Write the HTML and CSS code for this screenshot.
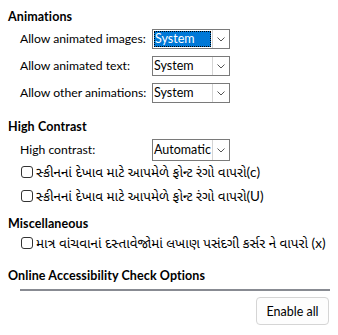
FILE: index.html
```html
<!DOCTYPE html>
<html>
<head>
<meta charset="utf-8">
<link rel="stylesheet" href="styles.css">
</head>
<body>
<div class="page">
  <div class="heading h-first">Animations</div>
  <div class="grid">
    <div class="label">Allow animated images:</div>
    <div class="combo focused"><div class="value"><span class="sel">System</span></div><div class="btn"><svg width="8" height="5" viewBox="0 0 8 5"><polyline points="0.5,0.5 4,4 7.5,0.5" fill="none" stroke="#555" stroke-width="1"/></svg></div></div>
    <div class="label">Allow animated text:</div>
    <div class="combo"><div class="value">System</div><div class="btn"><svg width="8" height="5" viewBox="0 0 8 5"><polyline points="0.5,0.5 4,4 7.5,0.5" fill="none" stroke="#555" stroke-width="1"/></svg></div></div>
    <div class="label">Allow other animations:</div>
    <div class="combo"><div class="value">System</div><div class="btn"><svg width="8" height="5" viewBox="0 0 8 5"><polyline points="0.5,0.5 4,4 7.5,0.5" fill="none" stroke="#555" stroke-width="1"/></svg></div></div>
  </div>

  <div class="heading h-contrast">High Contrast</div>
  <div class="grid grid-hc">
    <div class="label">High contrast:</div>
    <div class="combo tall"><div class="value">Automatic</div><div class="btn"><svg width="8" height="5" viewBox="0 0 8 5"><polyline points="0.5,0.5 4,4 7.5,0.5" fill="none" stroke="#555" stroke-width="1"/></svg></div></div>
  </div>
  <div class="check"><span class="box"></span><span class="gu">સ્કીનનાં દેખાવ માટે આપમેળે ફોન્ટ રંગો વાપરો(c)</span></div>
  <div class="check check2"><span class="box"></span><span class="gu">સ્કીનનાં દેખાવ માટે આપમેળે ફોન્ટ રંગો વાપરો(U)</span></div>

  <div class="heading h-misc">Miscellaneous</div>
  <div class="check"><span class="box"></span><span class="gu">માત્ર વાંચવાનાં દસ્તાવેજોમાં લખાણ પસંદગી કર્સર ને વાપરો (x)</span></div>

  <div class="heading h-online">Online Accessibility Check Options</div>
  <div class="sep"></div>
  <div class="actions"><button class="button">Enable all</button></div>
</div>
</body>
</html>
```

FILE: styles.css
```css
html, body {
  margin: 0;
  padding: 0;
  background: #ffffff;
}
body {
  font-family: Lato, "Noto Sans Gujarati", "Lohit Gujarati", sans-serif;
  font-size: 12.5px;
  color: #000;
  width: 338px;
  height: 335px;
  overflow: hidden;
}
.page {
  padding: 9px 8px 0 8px;
}
.heading {
  font-weight: bold;
  line-height: 16px;
  height: 16px;
  white-space: nowrap;
  letter-spacing: 0.1px;
}
.h-contrast { margin-top: 16px; }
.h-misc { margin-top: 9px; }
.h-online { margin-top: 14px; }

.grid {
  display: grid;
  grid-template-columns: 132px 78px;
  grid-auto-rows: 20px;
  row-gap: 7px;
  margin-top: 4px;
  padding-left: 12px;
  align-items: center;
}
.grid-hc { grid-auto-rows: 22px; }
.label { font-size: 12.2px; line-height: 16px; white-space: nowrap; }

.combo {
  display: flex;
  height: 20px;
  box-sizing: border-box;
  border: 1px solid #7a7a7a;
  background: #fff;
}
.combo.tall { height: 22px; }
.value {
  flex: 1;
  display: flex;
  align-items: center;
  padding-left: 1px;
  line-height: 16px;
  white-space: nowrap;
  overflow: hidden;
}
.focused .value { padding: 1px; }
.sel {
  flex: 1;
  align-self: stretch;
  display: flex;
  align-items: center;
  background: #0078d7;
  color: #fff;
  outline: 1px dotted #000;
  outline-offset: -1px;
  padding-left: 1px;
}
.btn {
  width: 17px;
  flex: none;
  box-sizing: border-box;
  border-left: 1px solid #d4d4d4;
  background: #fff;
  display: flex;
  align-items: center;
  justify-content: center;
}

.check {
  display: flex;
  align-items: center;
  height: 22px;
  padding-left: 13px;
}
.check2 { margin-top: 2px; }
.box {
  width: 12px;
  height: 12px;
  box-sizing: border-box;
  border: 1px solid #333;
  border-radius: 3px;
  background: #fff;
  margin-right: 3px;
  flex: none;
}
.gu { font-size: 13.5px; line-height: 18px; white-space: nowrap; }

.sep {
  margin: 5px 0 0 12px;
  height: 2px;
  background: #888b92;
}
.actions {
  display: flex;
  justify-content: flex-end;
  margin-top: 6px;
  padding-right: 1px;
}
.button {
  font-family: inherit;
  font-size: 12.5px;
  color: #000;
  width: 73px;
  height: 28px;
  box-sizing: border-box;
  background: #fdfdfd;
  border: 1px solid #d5d5d5;
  border-radius: 4px;
  padding: 0;
}
```
